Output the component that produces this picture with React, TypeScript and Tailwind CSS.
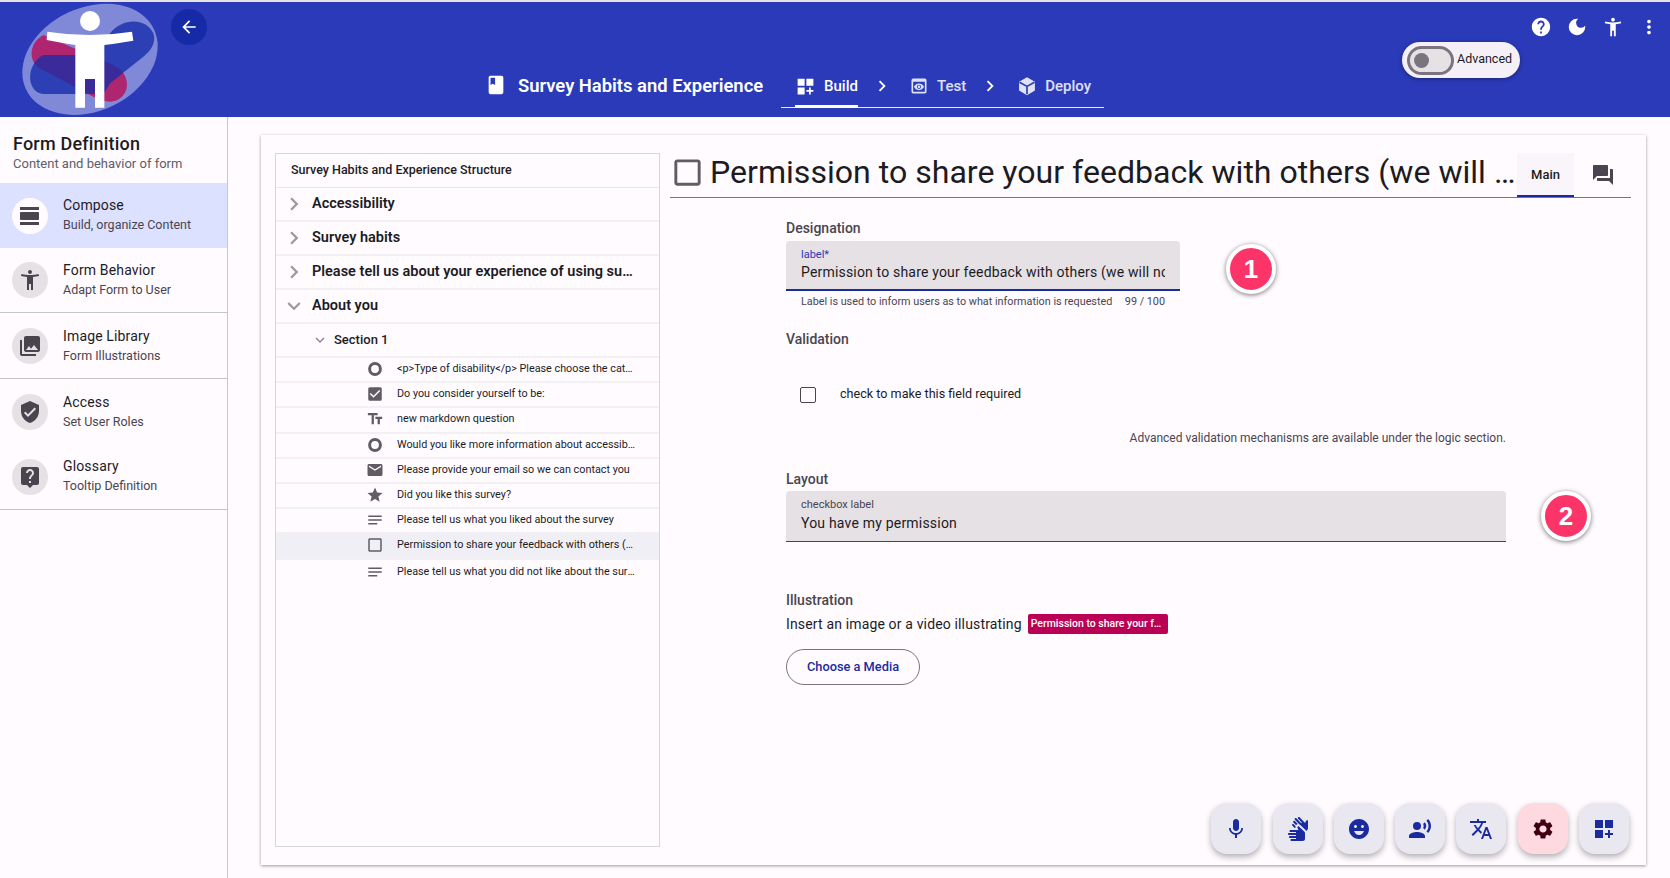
import React from "react";
import {
  MdAccessibilityNew,
  MdArrowBack,
  MdBook,
  MdCheckBox,
  MdCheckBoxOutlineBlank,
  MdChevronRight,
  MdDarkMode,
  MdDashboardCustomize,
  MdEmail,
  MdEmojiEmotions,
  MdExpandMore,
  MdForum,
  MdHelp,
  MdLiveHelp,
  MdMic,
  MdMoreVert,
  MdNotes,
  MdPhotoLibrary,
  MdPreview,
  MdRecordVoiceOver,
  MdSettings,
  MdSignLanguage,
  MdStar,
  MdTextFields,
  MdTranslate,
  MdVerifiedUser,
  MdViewDay,
} from "react-icons/md";

const Ring = ({ size = 18 }: { size?: number }) => (
  <svg width={size} height={size} viewBox="0 0 18 18">
    <circle cx="9" cy="9" r="5.4" fill="none" stroke="currentColor" strokeWidth="3" />
  </svg>
);

const Cube = () => (
  <svg width="20" height="20" viewBox="0 0 24 24">
    <path d="M12 1.5 21.5 7v10.5L12 23l-9.5-5.5V7z" fill="currentColor" />
    <path d="M3 7.5 12 12.5 21 7.5M12 12.5V22" fill="none" stroke="#2a3ab9" strokeWidth="2" />
  </svg>
);

const Logo = () => (
  <svg width="160" height="117" viewBox="0 0 480 351" className="shrink-0 -mt-[2px]">
    <ellipse cx="270" cy="178" rx="212" ry="155" transform="rotate(-25 270 178)" fill="#8089d8" />
    <path
      d="M130 105 340 195C385 215 395 270 360 295 340 312 310 305 280 290L120 205C85 185 85 130 130 105Z"
      fill="#ae2570"
    />
    <path
      d="M130 165H300L330 100C370 50 440 55 460 100 470 130 450 155 430 170L330 250 310 282H130C85 280 70 200 130 165Z"
      fill="#2c3fb4"
    />
    <clipPath id="logo-band">
      <path d="M130 105 340 195C385 215 395 270 360 295 340 312 310 305 280 290L120 205C85 185 85 130 130 105Z" />
    </clipPath>
    <path
      d="M130 165H300L330 100C370 50 440 55 460 100 470 130 450 155 430 170L330 250 310 282H130C85 280 70 200 130 165Z"
      fill="#3a2a9a"
      clipPath="url(#logo-band)"
    />
    <circle cx="270" cy="63" r="30" fill="#fff" />
    <path
      d="M142 95Q270 115 396 95L400 122Q350 130 313 135V323H285V237H255V323H226V135Q180 128 140 120Z"
      fill="#fff"
    />
  </svg>
);

const sideItems = [
  { title: "Compose", sub: "Build, organize Content", icon: MdViewDay, h: "h-[65px]", tx: "", active: true },
  { title: "Form Behavior", sub: "Adapt Form to User", icon: MdAccessibilityNew, h: "h-[65px] border-b border-[#c4c7c9]", tx: "" },
  { title: "Image Library", sub: "Form Illustrations", icon: MdPhotoLibrary, h: "h-[66px] border-b border-[#c4c7c9]", tx: "mt-[2px]" },
  { title: "Access", sub: "Set User Roles", icon: MdVerifiedUser, h: "h-[65px]", tx: "mt-[2px]" },
  { title: "Glossary", sub: "Tooltip Definition", icon: MdLiveHelp, h: "h-[66px] border-b border-[#c4c7c9]", tx: "" },
];

const questions = [
  { text: "<p>Type of disability</p> Please choose the category that best describes you", icon: <Ring /> },
  { text: "Do you consider yourself to be:", icon: <MdCheckBox size={18} /> },
  { text: "new markdown question", icon: <MdTextFields size={18} /> },
  { text: "Would you like more information about accessibility features", icon: <Ring /> },
  { text: "Please provide your email so we can contact you", icon: <MdEmail size={18} /> },
  { text: "Did you like this survey?", icon: <MdStar size={18} /> },
  { text: "Please tell us what you liked about the survey", icon: <MdNotes size={18} /> },
  { text: "Permission to share your feedback with others (we will not use your name)", icon: <MdCheckBoxOutlineBlank size={18} />, active: true },
  { text: "Please tell us what you did not like about the survey", icon: <MdNotes size={18} /> },
];

const fabs = [MdMic, MdSignLanguage, MdEmojiEmotions, MdRecordVoiceOver, MdTranslate, MdSettings, MdDashboardCustomize];

const Badge = ({ n, className }: { n: string; className: string }) => (
  <div
    className={`w-[50px] h-[50px] shrink-0 rounded-full border-[4px] border-white bg-[#fc3468] text-white flex items-center justify-center text-[26px] font-bold shadow-[0_1px_5px_rgba(0,0,0,0.55)] [font-family:'Liberation_Sans',sans-serif] ${className}`}
  >
    {n}
  </div>
);

const App = () => {
  return (
    <div className="w-[1670px] h-[878px] overflow-hidden flex flex-col bg-[#fffbff] text-[#1c1b1f] [font-family:Roboto,sans-serif]">
      {/* Top bar */}
      <header className="h-[117px] shrink-0 border-t-2 border-[#e6e1e5] bg-[#2a3ab9] flex text-white">
        <Logo />
        <button className="w-9 h-9 mt-[7px] ml-[11px] rounded-full bg-[#162aa8] flex items-center justify-center shrink-0">
          <MdArrowBack size={20} />
        </button>
        <div className="ml-[276px] mt-[60px] flex items-start">
          <div className="flex items-center h-[46px] pl-[2px]">
            <MdBook size={22} className="mr-[11px]" />
            <span className="pt-[2px] text-[18.4px] font-semibold w-[263px] whitespace-nowrap">Survey Habits and Experience</span>
          </div>
          <div className="w-[323px] h-[46px] pt-[3px] border-b border-white/90 flex items-center pl-[14px] text-[15px] font-medium">
            <div className="relative h-full flex items-center gap-[8px] w-[63px]">
              <MdDashboardCustomize size={21} />
              <span>Build</span>
              <div className="absolute left-0 right-0 bottom-[-1px] h-[3px] bg-white" />
            </div>
            <MdChevronRight size={22} className="ml-[13px]" />
            <div className="flex items-center gap-[8px] ml-[16px] text-white/85">
              <MdPreview size={20} />
              <span>Test</span>
            </div>
            <MdChevronRight size={22} className="ml-[13px]" />
            <div className="flex items-center gap-[8px] ml-[16px] text-white/85">
              <Cube />
              <span>Deploy</span>
            </div>
          </div>
        </div>
        <div className="ml-auto relative w-[268px]">
          <div className="flex items-center absolute right-[10px] top-[14px] gap-[14px]">
            <MdHelp size={22} />
            <MdDarkMode size={22} />
            <MdAccessibilityNew size={22} />
            <MdMoreVert size={22} />
          </div>
          <div className="absolute left-0 top-[40px] w-[118px] h-[36px] rounded-full bg-[#f5eff7] shadow-[0_1px_4px_rgba(0,0,0,0.4)] flex items-center pl-[5px] text-[#1c1b1f]">
            <div className="w-[47px] h-[29px] rounded-full border-[3px] border-[#79747e] bg-[#e6e1e5] flex items-center pl-[4px]">
              <div className="w-[15px] h-[15px] rounded-full bg-[#79747e]" />
            </div>
            <span className="ml-[3px] text-[12.5px] leading-[16px] -mt-[2px]">Advanced</span>
          </div>
        </div>
      </header>

      <div className="flex-1 min-h-0 flex">
        {/* Left navigation */}
        <aside className="w-[228px] shrink-0 border-r border-[#c9c5ca]">
          <div className="h-[66px] pl-[13px] pt-[15px]">
            <h1 className="text-[18px] font-medium leading-[24px] tracking-[0.2px]">Form Definition</h1>
            <p className="text-[13px] leading-[16px] text-[#605d66]">Content and behavior of form</p>
          </div>
          {sideItems.map((item) => {
            const Icon = item.icon;
            return (
              <div key={item.title} className={`flex items-center pl-[12px] ${item.h} ${item.active ? "bg-[#dce1ff]" : ""}`}>
                <div className={`w-9 h-9 rounded-full flex items-center justify-center text-[#48454e] ${item.active ? "bg-[#fffbff]" : "bg-[#e6e1e5]"}`}>
                  <Icon size={24} />
                </div>
                <div className={`ml-[15px] ${item.tx}`}>
                  <div className="text-[14px] leading-[19px] tracking-[0.15px]">{item.title}</div>
                  <div className="text-[12.5px] leading-[20px] text-[#49454f]">{item.sub}</div>
                </div>
              </div>
            );
          })}
        </aside>

        {/* Main */}
        <main className="flex-1 min-w-0 pl-[33px] pr-[24px] pt-[18px] pb-[13px]">
          <div className="h-full flex pl-[14px] pr-[15px] gap-[10px] bg-[#fffbff] shadow-[0_1px_3px_rgba(0,0,0,0.4)]">
            {/* Structure tree */}
            <section className="w-[385px] shrink-0 my-[18px] border border-[#d8d4d9]">
              <div className="h-[34px] pl-[15px] flex items-center text-[12.5px] font-medium border-b border-[#e9e6ea]">
                Survey Habits and Experience Structure
              </div>
              {["Accessibility", "Survey habits", "Please tell us about your experience of using survey forms", "About you"].map((t, i) => (
                <div key={t} className="h-[34px] flex items-center border-b-2 border-[#f3f0f4] text-[14.5px] font-semibold">
                  <div className="w-[36px] flex justify-center text-[#9a969e]">
                    {i === 3 ? <MdExpandMore size={26} /> : <MdChevronRight size={26} />}
                  </div>
                  <span className="w-[323px] truncate">{t}</span>
                </div>
              ))}
              <div className="h-[34px] flex items-center border-b-2 border-[#f3f0f4] pl-[35px] text-[13px] font-medium">
                <MdExpandMore size={18} className="text-[#8f8b94] mr-[5px]" />
                Section 1
              </div>
              {questions.map((q, i) => (
                <div
                  key={q.text}
                  className={`h-[25.2px] flex items-center pb-[1px] pl-[90px] text-[10.8px] ${i < questions.length - 1 ? "border-b-2 border-[#f3f0f4]" : ""} ${q.active ? "bg-[#f1eff6]" : ""}`}
                >
                  <div className="w-[18px] flex justify-center text-[#5f5c64]">{q.icon}</div>
                  <span className="ml-[13px] w-[240px] truncate">{q.text}</span>
                </div>
              ))}
            </section>

            {/* Editor */}
            <section className="flex-1 min-w-0 pt-[18px] pb-[11px] flex flex-col">
              <div className="h-[45px] shrink-0 flex items-center border-b border-[#79747e]">
                <MdCheckBoxOutlineBlank size={35} className="text-[#5f5c64] shrink-0 -mt-[6px]" />
                <h2 className="ml-[5px] -mt-[6px] flex-1 min-w-0 truncate text-[32.1px] leading-[44px]">
                  Permission to share your feedback with others (we will not use your name)
                </h2>
                <div className="w-[57px] h-[44px] pt-[1px] shrink-0 flex items-center justify-center bg-[#f9f5fb] border-b-2 border-[#1a2ba0] text-[13px] font-medium">
                  Main
                </div>
                <div className="w-[57px] shrink-0 flex justify-center text-[#49454f]">
                  <MdForum size={24} />
                </div>
              </div>

              <div className="flex-1 min-h-0 pl-[116px]">
                <div className="mt-[20px] text-[14px] font-medium leading-[20px] text-[#49454f]">Designation</div>
                <div className="flex mt-[3px] items-start">
                  <div>
                    <div className="w-[394px] h-[50px] px-[15px] pt-[8px] rounded-t bg-[#e6e1e5] border-b-2 border-[#1a2ba0]">
                      <div className="text-[11px] leading-[12px] text-[#2a3ab9]">label*</div>
                      <div className="mt-[1px] text-[14px] leading-[20px] tracking-[0.18px] whitespace-nowrap overflow-hidden">
                        Permission to share your feedback with others (we will not use your name)
                      </div>
                    </div>
                    <div className="px-[15px] mt-[4px] flex justify-between text-[10.8px] leading-[14px] text-[#49454f]">
                      <span>Label is used to inform users as to what information is requested</span>
                      <span>99 / 100</span>
                    </div>
                  </div>
                  <Badge n="1" className="ml-[46px] mt-[3px]" />
                </div>

                <div className="mt-[20px] text-[14px] font-medium leading-[20px] text-[#49454f]">Validation</div>
                <div className="mt-[36px] flex items-center h-[20px] pl-[14px] text-[12.6px]">
                  <div className="w-4 h-4 rounded-[2px] border-[1.5px] border-[#49454f]" />
                  <span className="ml-[24px] -mt-[2px]">check to make this field required</span>
                </div>
                <div className="mt-[25px] w-[720px] text-right text-[12px] leading-[16px] text-[#49454f]">
                  Advanced validation mechanisms are available under the logic section.
                </div>

                <div className="mt-[23px] text-[14px] font-medium leading-[20px] text-[#49454f]">Layout</div>
                <div className="flex mt-[2px] items-start">
                  <div className="w-[720px] h-[51px] px-[15px] pt-[8px] rounded-t bg-[#e6e1e5] border-b border-[#49454f]">
                    <div className="text-[11px] leading-[12px] text-[#49454f]">checkbox label</div>
                    <div className="mt-[2px] text-[14px] leading-[20px] tracking-[0.2px]">You have my permission</div>
                  </div>
                  <Badge n="2" className="ml-[35px]" />
                </div>

                <div className="mt-[48px] text-[14px] font-medium leading-[20px] text-[#49454f]">Illustration</div>
                <div className="mt-[4px] flex items-center h-[20px] text-[14px] tracking-[0.15px]">
                  Insert an image or a video illustrating
                  <span className="ml-[6px] w-[140px] h-[20px] rounded-[2px] bg-[#ba0054] text-white text-[10.5px] font-medium tracking-normal leading-[20px] px-[3px] truncate">
                    Permission to share your feedback
                  </span>
                </div>
                <button className="mt-[15px] w-[134px] h-[36px] rounded-full border border-[#79747e] text-[12.8px] font-medium text-[#1a2ba0]">
                  Choose a Media
                </button>
              </div>

              {/* Media action buttons */}
              <div className="shrink-0 flex justify-end gap-[11.3px] pr-[2px]">
                {fabs.map((Icon, i) => (
                  <div
                    key={i}
                    className={`w-[50px] h-[51px] rounded-[16px] flex items-center justify-center shadow-[0_3px_6px_rgba(0,0,0,0.3)] ${
                      i === 5 ? "bg-[#ffd9e0] text-[#3f0016]" : "bg-[#e9e7f0] text-[#1a2ba0]"
                    }`}
                  >
                    <Icon size={24} />
                  </div>
                ))}
              </div>
            </section>
          </div>
        </main>
      </div>
    </div>
  );
};

export default App;
